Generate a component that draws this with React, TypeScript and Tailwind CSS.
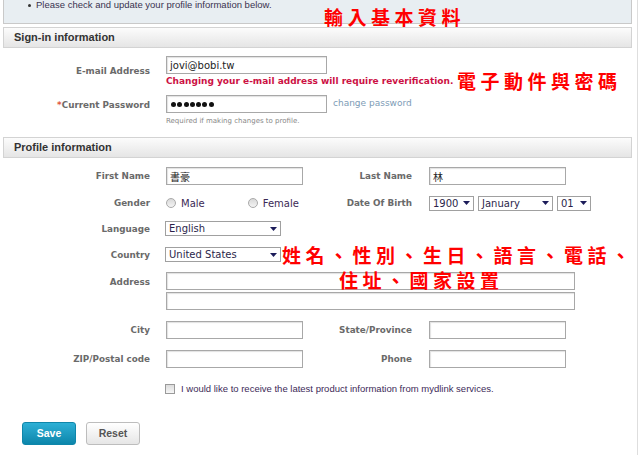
import React from "react";

const V = "font-['DejaVu_Sans',Verdana,sans-serif]";
const A = "font-['Liberation_Sans',Arial,sans-serif]";
const CJK = "font-['Noto_Sans_CJK_TC','Noto_Sans_CJK_SC',sans-serif]";

function Label({ children, w = "w-[147px]", red = false }: { children: React.ReactNode; w?: string; red?: boolean }) {
  return (
    <div className={`${w} shrink-0 text-right text-[8.8px] font-bold text-[#6a6a6a] leading-[12px] ${V}`}>
      {red && <span className="text-[#e0573a]">*</span>}
      {children}
    </div>
  );
}

function Input({ w, value, cls = "" }: { w: string; value?: React.ReactNode; cls?: string }) {
  return (
    <div
      className={`${w} h-[18px] shrink-0 border border-[#a8a8a8] bg-white shadow-[inset_1px_1px_1px_#e2e2e2] flex items-center px-[3px] text-[10px] text-[#222] ${V} ${cls}`}
    >
      {value}
    </div>
  );
}

function Arrow() {
  return (
    <svg width="7" height="4" viewBox="0 0 7 4" className="shrink-0">
      <path d="M0 0h7L3.5 4z" fill="#1c1c5a" />
    </svg>
  );
}

function Select({ w, value }: { w: string; value: string }) {
  return (
    <div
      className={`${w} h-[15px] shrink-0 border border-[#a0a0a0] bg-white flex items-center justify-between pl-[3px] pr-[3px] text-[10px] text-[#2b1f4a] leading-[13px] ${V}`}
    >
      <span>{value}</span>
      <Arrow />
    </div>
  );
}

function Radio() {
  return (
    <div className="w-[10px] h-[10px] rounded-full border border-[#a9a9a9] bg-gradient-to-b from-[#d8d8d8] to-[#f4f4f4] shrink-0" />
  );
}

function Header({ children }: { children: React.ReactNode }) {
  return (
    <div
      className={`h-[21px] border border-[#d3d3d3] bg-gradient-to-b from-[#fcfcfc] to-[#e5e5e5] flex items-center pl-[10px] text-[11px] font-bold text-[#333] ${A}`}
    >
      {children}
    </div>
  );
}

export default function App() {
  return (
    <div className="relative w-[640px] h-[455px] overflow-hidden bg-white">
      <div className="w-[638px] h-[455px] border-r border-[#dedede] pl-[3px] pr-[5px]">
        {/* notice box */}
        <div className="h-[24px] border-x border-b border-[#c9c9c9] bg-[#e8eef2] flex items-start pl-[24px]">
          <div className={`flex items-center h-[10px] text-[9.5px] text-[#3a3350] ${A}`}>
            <span className="w-[3px] h-[3px] rounded-full bg-[#333] mr-[5px]" />
            Please check and update your profile information below.
          </div>
        </div>

        <div className="mt-[3px]">
          <Header>Sign-in information</Header>
        </div>

        {/* email */}
        <div className="flex items-start mt-[8px]">
          <div className="pt-[9px]">
            <Label>E-mail Address</Label>
          </div>
          <div className="ml-[16px] flex flex-col">
            <Input w="w-[161px]" value="jovi@bobi.tw" />
            <div className={`mt-[1px] leading-[12px] text-[9px] font-bold text-[#cc1144] whitespace-nowrap ${V}`}>
              Changing your e-mail address will require reverification.
            </div>
          </div>
        </div>

        {/* password */}
        <div className="flex items-start mt-[8px]">
          <div className="pt-[4px]">
            <Label red>Current Password</Label>
          </div>
          <div className="ml-[16px] flex flex-col">
            <div className="flex items-center">
              <Input
                w="w-[161px]"
                value={
                  <span className="flex gap-[1.3px] pl-[1px]">
                    {[0, 1, 2, 3, 4, 5, 6].map((i) => (
                      <span key={i} className="w-[5px] h-[5px] rounded-full bg-[#111]" />
                    ))}
                  </span>
                }
              />
              <span className={`ml-[6px] text-[9px] text-[#7d9bb6] ${V}`}>change password</span>
            </div>
            <div className={`mt-[3px] leading-[10px] text-[7px] text-[#888] ${V}`}>
              Required if making changes to profile.
            </div>
          </div>
        </div>

        <div className="mt-[11px]">
          <Header>Profile information</Header>
        </div>

        {/* first / last name */}
        <div className="flex items-center mt-[9px]">
          <Label>First Name</Label>
          <Input w="w-[137px] ml-[16px]" value={<span className={`text-[10px] ${CJK}`}>書豪</span>} />
          <Label w="w-[109px]">Last Name</Label>
          <Input w="w-[137px] ml-[17px]" value={<span className={`text-[10px] ${CJK}`}>林</span>} />
        </div>

        {/* gender / dob */}
        <div className="flex items-center mt-[10px] h-[16px]">
          <Label>Gender</Label>
          <div className={`w-[137px] ml-[16px] flex items-center text-[10px] text-[#3b2a55] ${V}`}>
            <Radio />
            <span className="ml-[5px]">Male</span>
            <div className="ml-[43px]">
              <Radio />
            </div>
            <span className="ml-[5px]">Female</span>
          </div>
          <Label w="w-[109px]">Date Of Birth</Label>
          <div className="ml-[17px] flex items-center gap-[4px]">
            <Select w="w-[45px]" value="1900" />
            <Select w="w-[75px]" value="January" />
            <Select w="w-[34px]" value="01" />
          </div>
        </div>

        {/* language */}
        <div className="flex items-center mt-[10px] h-[15px]">
          <Label>Language</Label>
          <div className="ml-[15px]">
            <Select w="w-[116px]" value="English" />
          </div>
        </div>

        {/* country */}
        <div className="flex items-center mt-[11px] h-[15px]">
          <Label>Country</Label>
          <div className="ml-[15px]">
            <Select w="w-[116px]" value="United States" />
          </div>
        </div>

        {/* address */}
        <div className="flex items-start mt-[10px]">
          <div className="pt-[4px]">
            <Label>Address</Label>
          </div>
          <div className="ml-[16px] flex flex-col gap-[2px]">
            <Input w="w-[409px]" />
            <Input w="w-[409px]" />
          </div>
        </div>

        {/* city / state */}
        <div className="flex items-center mt-[11px]">
          <Label>City</Label>
          <Input w="w-[137px] ml-[16px]" />
          <Label w="w-[109px]">State/Province</Label>
          <Input w="w-[137px] ml-[17px]" />
        </div>

        {/* zip / phone */}
        <div className="flex items-center mt-[11px]">
          <Label>ZIP/Postal code</Label>
          <Input w="w-[137px] ml-[16px]" />
          <Label w="w-[109px]">Phone</Label>
          <Input w="w-[137px] ml-[17px]" />
        </div>

        {/* checkbox */}
        <div className="flex items-center mt-[14px] ml-[162px]">
          <div className="w-[10px] h-[10px] border border-[#9a9a9a] bg-gradient-to-b from-[#dcdcdc] to-[#f6f6f6] shrink-0" />
          <span className={`ml-[6px] text-[9.5px] text-[#3d2a58] ${A}`}>
            I would like to receive the latest product information from mydlink services.
          </span>
        </div>

        {/* buttons */}
        <div className="flex items-center mt-[26px] ml-[19px] gap-[10px]">
          <button
            className={`w-[54px] h-[23px] rounded-[3px] border border-[#0f86aa] bg-gradient-to-b from-[#2db0d6] to-[#0b86ab] text-white text-[10.5px] font-bold ${A}`}
          >
            Save
          </button>
          <button
            className={`w-[54px] h-[23px] rounded-[3px] border border-[#bdbdbd] bg-gradient-to-b from-[#ffffff] to-[#e6e6e6] text-[#555] text-[10.5px] font-bold ${A}`}
          >
            Reset
          </button>
        </div>
      </div>

      {/* red annotations */}
      <div className={`absolute left-[324px] top-[5px] text-[19px] leading-[24px] font-bold tracking-[4.5px] text-[#ff0000] ${CJK}`}>
        輸入基本資料
      </div>
      <div className={`absolute left-[457px] top-[69px] text-[19px] leading-[24px] font-bold tracking-[4.5px] text-[#ff0000] ${CJK}`}>
        電子動件與密碼
      </div>
      <div className={`absolute left-[282px] top-[243px] text-[19px] leading-[24px] font-bold tracking-[4.5px] text-[#ff0000] whitespace-nowrap ${CJK}`}>
        姓名、性別、生日、語言、電話、
      </div>
      <div className={`absolute left-[339px] top-[268px] text-[19px] leading-[24px] font-bold tracking-[4.5px] text-[#ff0000] ${CJK}`}>
        住址、國家設置
      </div>
    </div>
  );
}
